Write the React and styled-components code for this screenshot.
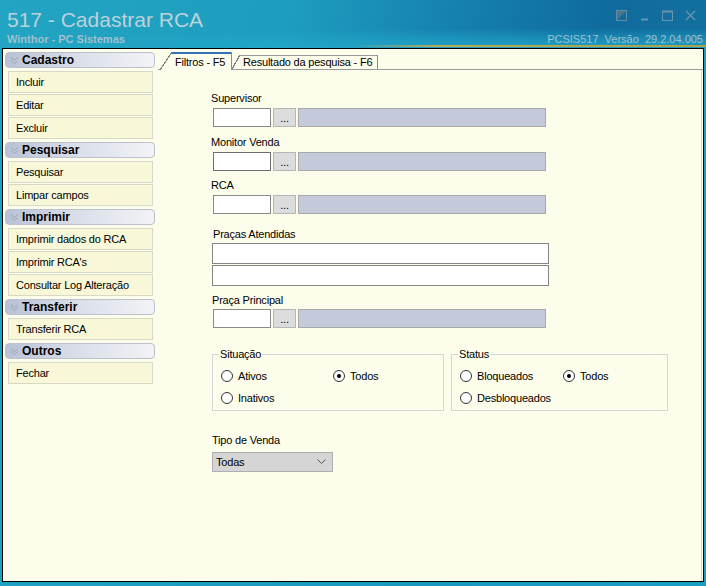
import React from "react";
import styled, { createGlobalStyle } from "styled-components";

const GlobalStyle = createGlobalStyle`
  html, body { margin: 0; padding: 0; }
  body {
    font-family: "Liberation Sans", Arial, sans-serif;
    font-size: 11px;
    letter-spacing: -0.2px;
    color: #000;
  }
`;

const PAPER = "#fdfdec";

const Window = styled.div`
  width: 706px;
  height: 586px;
  display: flex;
  flex-direction: column;
  background: linear-gradient(90deg, #1fa2c0 0%, #1a9aba 60%, #1a9ec0 100%);
  overflow: hidden;
`;

const TitleBar = styled.div`
  height: 48px;
  flex-shrink: 0;
  box-sizing: border-box;
  padding: 8px 3px 0 7px;
  display: flex;
  justify-content: space-between;
  background:
    linear-gradient(90deg, rgba(180, 170, 88, 0) 50%, #b4aa58 62%, #a9a24c 100%) 0 45px / 100% 2px no-repeat,
    radial-gradient(120% 60% at 85% 100%, rgba(40, 180, 210, 0.75), rgba(40, 180, 210, 0) 70%),
    linear-gradient(100deg, #22a4c2 0%, #1e9ebf 40%, #1683b1 62%, #0f6b9d 85%, #12709f 100%);
`;

const TitleBlock = styled.div`
  display: flex;
  flex-direction: column;
`;

const Title = styled.div`
  font-size: 21px;
  line-height: 24px;
  letter-spacing: 0;
  color: #bcd1da;
`;

const Subtitle = styled.div`
  margin-top: 1px;
  font-size: 11px;
  line-height: 13px;
  letter-spacing: 0;
  font-weight: bold;
  color: #9fc0cd;
`;

const RightBlock = styled.div`
  display: flex;
  flex-direction: column;
  align-items: flex-end;
`;

const Controls = styled.div`
  display: flex;
  gap: 12px;
  margin: 2px 7px 0 0;
  height: 11px;
  opacity: 0.75;
`;

const Version = styled.div`
  margin-top: 12px;
  line-height: 13px;
  letter-spacing: 0;
  color: #9dc2d2;
  word-spacing: 3px;
`;

const Frame = styled.div`
  flex: 1;
  margin: 0 2px 4px 2px;
  border: 1px solid #000;
  background: ${PAPER};
  display: flex;
  min-height: 0;
`;

const Sidebar = styled.div`
  width: 152px;
  flex-shrink: 0;
  box-sizing: border-box;
  padding: 3px 0 0 2px;
  display: flex;
  flex-direction: column;
`;

const Section = styled.div`
  display: flex;
  flex-direction: column;
  margin-bottom: 2px;
`;

const SectionHeader = styled.div`
  width: 150px;
  height: 16px;
  box-sizing: border-box;
  border: 1px solid #bcc0cc;
  border-radius: 4px;
  background: linear-gradient(90deg, #b8c1d6 0%, #d8dde8 45%, #f2f3f6 100%);
  display: flex;
  align-items: center;
  gap: 3px;
  padding-left: 4px;
  margin-bottom: 3px;
  font-size: 12px;
  font-weight: bold;
  letter-spacing: 0;
`;

const Item = styled.div`
  width: 145px;
  height: 22px;
  margin: 0 0 1px 3px;
  box-sizing: border-box;
  border: 1px solid #d8d8c6;
  background: #f8f8d9;
  padding-left: 7px;
  display: flex;
  align-items: center;
`;

const Main = styled.div`
  flex: 1;
  margin-left: 3px;
  display: flex;
  flex-direction: column;
`;

const TabBar = styled.div`
  height: 21px;
  flex-shrink: 0;
  box-sizing: border-box;
  padding-left: 2px;
  display: flex;
  align-items: flex-end;
  background: linear-gradient(#9a9a9a, #9a9a9a) left bottom / 100% 1px no-repeat;
`;

const Tab = styled.div`
  width: ${(p) => p.$width}px;
  height: ${(p) => (p.$active ? 18 : 14)}px;
  margin-bottom: ${(p) => (p.$active ? 0 : 1)}px;
  box-sizing: border-box;
  padding: ${(p) => (p.$active ? 2 : 0)}px 0 0 ${(p) => p.$slant + 3}px;
  border-right: 1px solid #8c8c8c;
  display: flex;
  align-items: center;
  white-space: nowrap;
  background:
    linear-gradient(${(p) => (p.$active ? "#3570b8, #3570b8" : "#9a9a9a, #9a9a9a")})
      ${(p) => p.$slant}px 0 / calc(100% - ${(p) => p.$slant}px) ${(p) => (p.$active ? 2 : 1)}px no-repeat,
    linear-gradient(to bottom right, rgba(0, 0, 0, 0) calc(50% - 0.6px), #808080 calc(50% - 0.6px),
      #808080 calc(50% + 0.6px), ${PAPER} calc(50% + 0.6px)) 0 0 / ${(p) => p.$slant}px 100% no-repeat,
    linear-gradient(${PAPER}, ${PAPER}) ${(p) => p.$slant}px 0 / calc(100% - ${(p) => p.$slant}px) 100% no-repeat;
`;

const Panel = styled.div`
  flex: 1;
  box-sizing: border-box;
  padding: 21px 0 0 53px;
  border-right: 1px solid #d4d4e6;
  margin-right: 1px;
  display: flex;
  flex-direction: column;
  align-items: flex-start;
`;

const Label = styled.div`
  line-height: 14px;
  margin-top: ${(p) => p.$mt || 0}px;
  margin-left: ${(p) => p.$ml || 0}px;
`;

const LookupRow = styled.div`
  display: flex;
  gap: 2px;
  height: 19px;
  margin: ${(p) => p.$mt || 3}px 0 0 2px;
`;

const CodeInput = styled.div`
  width: 58px;
  box-sizing: border-box;
  border: 1px solid ${(p) => (p.$focus ? "#6e6e6e" : "#8a8a8a")};
  background: #fff;
`;

const DotsButton = styled.div`
  width: 23px;
  box-sizing: border-box;
  border: 1px solid #b6b6b6;
  background: #dcdcdc;
  display: flex;
  justify-content: center;
  align-items: flex-end;
  padding-bottom: 3px;
  line-height: 10px;
`;

const Description = styled.div`
  width: 248px;
  box-sizing: border-box;
  border: 1px solid #a8a8a8;
  background: #c4cad9;
`;

const TextBox = styled.div`
  width: 337px;
  height: 21px;
  box-sizing: border-box;
  border: 1px solid #858585;
  background: #fff;
  margin: ${(p) => p.$mt || 0}px 0 0 1px;
`;

const GroupRow = styled.div`
  display: flex;
  gap: 7px;
  margin: 19px 0 0 1px;
`;

const Group = styled.fieldset`
  width: ${(p) => p.$width}px;
  height: 64px;
  box-sizing: border-box;
  margin: 0;
  padding: 8px 0 0 8px;
  border: 1px solid #d6d6d6;
  display: grid;
  grid-template-columns: ${(p) => p.$col}px auto;
  grid-auto-rows: 14px;
  row-gap: 8px;
  align-content: start;

  legend {
    padding: 0 1px;
    margin-left: -2px;
    line-height: 14px;
  }
`;

const Radio = styled.div`
  display: flex;
  align-items: center;
  gap: 5px;
  line-height: 14px;
`;

const Circle = styled.span`
  width: 12px;
  height: 12px;
  box-sizing: border-box;
  border: 1px solid #333;
  border-radius: 50%;
  background: #fff;
  display: flex;
  align-items: center;
  justify-content: center;

  &::after {
    content: "";
    width: 4px;
    height: 4px;
    border-radius: 50%;
    background: ${(p) => (p.$checked ? "#000" : "transparent")};
  }
`;

const Select = styled.div`
  width: 121px;
  height: 20px;
  box-sizing: border-box;
  margin: 5px 0 0 1px;
  border: 1px solid #afafaf;
  background: #d5d5d5;
  padding: 0 6px 0 3px;
  display: flex;
  align-items: center;
  justify-content: space-between;
`;

const Chevron = () => (
  <svg width="9" height="9" viewBox="0 0 9 9">
    <path d="M1 1.5 L4.5 4.5 L8 1.5 M1 4.5 L4.5 7.5 L8 4.5" fill="none" stroke="#a4a6b6" strokeWidth="1" />
  </svg>
);

const sections = [
  { title: "Cadastro", items: ["Incluir", "Editar", "Excluir"] },
  { title: "Pesquisar", items: ["Pesquisar", "Limpar campos"] },
  { title: "Imprimir", items: ["Imprimir dados do RCA", "Imprimir RCA's", "Consultar Log Alteração"] },
  { title: "Transferir", items: ["Transferir RCA"] },
  { title: "Outros", items: ["Fechar"] },
];

const Lookup = ({ mt, focus }) => (
  <LookupRow $mt={mt}>
    <CodeInput $focus={focus} />
    <DotsButton>...</DotsButton>
    <Description />
  </LookupRow>
);

const Option = ({ label, checked }) => (
  <Radio>
    <Circle $checked={checked} />
    {label}
  </Radio>
);

const App = () => {
  return (
    <>
      <GlobalStyle />
      <Window>
        <TitleBar>
          <TitleBlock>
            <Title>517 - Cadastrar RCA</Title>
            <Subtitle>Winthor - PC Sistemas</Subtitle>
          </TitleBlock>
          <RightBlock>
            <Controls>
              <svg width="11" height="11" viewBox="0 0 11 11">
                <rect x="0.5" y="0.5" width="10" height="10" fill="none" stroke="#7f98a5" />
                <path d="M1 10 L10 1 L1 1 Z" fill="#6f7e84" opacity="0.8" />
              </svg>
              <svg width="11" height="11" viewBox="0 0 11 11">
                <path d="M2 9.5 H9" stroke="#86a2b0" strokeWidth="2" />
              </svg>
              <svg width="11" height="11" viewBox="0 0 11 11">
                <rect x="0.5" y="1" width="10" height="9.5" fill="none" stroke="#86a2b0" />
                <path d="M0.5 1.8 H10.5" stroke="#86a2b0" strokeWidth="1.5" />
              </svg>
              <svg width="11" height="11" viewBox="0 0 11 11">
                <path d="M1 1 L10 10 M10 1 L1 10" stroke="#86a2b0" strokeWidth="1.4" />
              </svg>
            </Controls>
            <Version>PCSIS517 Versão 29.2.04.005</Version>
          </RightBlock>
        </TitleBar>

        <Frame>
          <Sidebar>
            {sections.map((s) => (
              <Section key={s.title}>
                <SectionHeader>
                  <Chevron />
                  {s.title}
                </SectionHeader>
                {s.items.map((it) => (
                  <Item key={it}>{it}</Item>
                ))}
              </Section>
            ))}
          </Sidebar>

          <Main>
            <TabBar>
              <Tab $active $slant={12} $width={72}>Filtros - F5</Tab>
              <Tab $slant={8} $width={146}>Resultado da pesquisa - F6</Tab>
            </TabBar>
            <Panel>
              <Label>Supervisor</Label>
              <Lookup />
              <Label $mt={8}>Monitor Venda</Label>
              <Lookup focus />
              <Label $mt={7}>RCA</Label>
              <Lookup />
              <Label $mt={13} $ml={2}>Praças Atendidas</Label>
              <TextBox $mt={2} />
              <TextBox $mt={1} />
              <Label $mt={7} $ml={1}>Praça Principal</Label>
              <Lookup mt={2} />

              <GroupRow>
                <Group $width={232} $col={112}>
                  <legend>Situação</legend>
                  <Option label="Ativos" />
                  <Option label="Todos" checked />
                  <Option label="Inativos" />
                </Group>
                <Group $width={217} $col={103}>
                  <legend>Status</legend>
                  <Option label="Bloqueados" />
                  <Option label="Todos" checked />
                  <Option label="Desbloqueados" />
                </Group>
              </GroupRow>

              <Label $mt={22} $ml={1}>Tipo de Venda</Label>
              <Select>
                Todas
                <svg width="9" height="6" viewBox="0 0 9 6">
                  <path d="M0.5 0.5 L4.5 4.5 L8.5 0.5" fill="none" stroke="#555" />
                </svg>
              </Select>
            </Panel>
          </Main>
        </Frame>
      </Window>
    </>
  );
};

export default App;
